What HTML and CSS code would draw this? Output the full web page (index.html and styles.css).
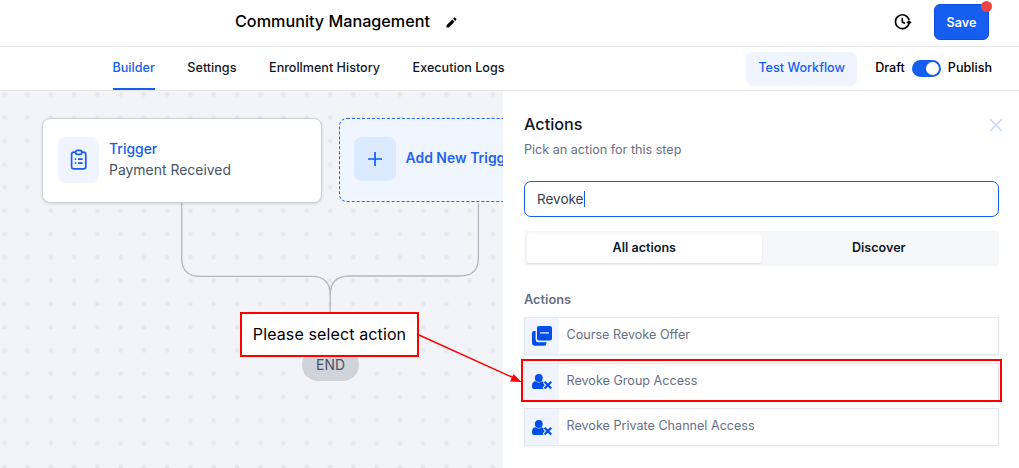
FILE: index.html
```html
<!DOCTYPE html>
<html lang="en">

<head>
    <meta charset="UTF-8">
    <meta name="viewport" content="width=device-width, initial-scale=1.0">
    <title>Community Management</title>
    <link rel="stylesheet" href="styles.css">
</head>

<body>
    <header class="topbar">
        <div class="title">
            <h1>Community Management</h1>
            <svg class="pencil" width="11" height="11" viewBox="0 0 12 12">
                <path d="M0.6 11.4V9L6.9 2.7L9.3 5.1L3 11.4ZM7.7 1.9L8.8 0.8Q9.5 0.3 10.1 0.9L11.1 1.9Q11.7 2.5 11.1 3.2L10.1 4.3Z" />
            </svg>
        </div>
        <svg class="history" width="18" height="18" viewBox="0 0 18 18">
            <path d="M15.2 9.6A6.9 6.9 0 1 1 15.1 7.2M13.2 13.8A6.9 6.9 0 0 1 8.3 15.9" />
            <path d="M8.3 4.8V9L11 10.5" />
            <path class="head" d="M12.3 9.6L15 7.2L17.6 9.6L15 11.6Z" />
        </svg>
        <button class="save">Save<span class="unsaved"></span></button>
    </header>

    <nav class="tabs">
        <div class="tab-list">
            <a class="tab active">Builder</a>
            <a class="tab">Settings</a>
            <a class="tab">Enrollment History</a>
            <a class="tab">Execution Logs</a>
        </div>
        <button class="test">Test Workflow</button>
        <div class="publish">
            <span>Draft</span>
            <span class="toggle"></span>
            <span>Publish</span>
        </div>
    </nav>

    <main class="workspace">
        <section class="canvas">
            <svg class="wires" width="503" height="377" viewBox="0 91 503 377">
                <defs>
                    <pattern id="dots" x="-7.3" y="82.9" width="23.27" height="23.27" patternUnits="userSpaceOnUse">
                        <circle cx="11.63" cy="11.63" r="2.4" fill="#e7e8e9" />
                    </pattern>
                </defs>
                <rect y="91" width="503" height="377" fill="url(#dots)" />
                <path d="M181.7 203V258Q181.7 276.4 200 276.4H312Q330.2 276.4 330.2 295V350" />
                <path d="M478.4 203V258Q478.4 276 460 276H348.5Q330.2 276.4 330.2 295" />
            </svg>

            <div class="node trigger">
                <div class="node-icon">
                    <svg width="18" height="22" viewBox="0 0 18 22">
                        <rect x="1.6" y="3.2" width="14.2" height="16.6" rx="2.4" />
                        <rect class="clip" x="5.6" y="1.4" width="6.2" height="4" rx="1.8" />
                        <path d="M4.8 10.2H6.2M8 10.2H12.6M4.8 14.2H6.2M8 14.2H12.6" />
                    </svg>
                </div>
                <div>
                    <div class="node-title">Trigger</div>
                    <div class="node-text">Payment Received</div>
                </div>
            </div>

            <div class="node add">
                <div class="node-icon">
                    <svg width="16" height="16" viewBox="0 0 16 16">
                        <path d="M8 1V15M1 8H15" />
                    </svg>
                </div>
                <div class="node-title">Add New Trigger</div>
            </div>

            <div class="end">END</div>
        </section>

        <aside class="panel">
            <div class="panel-head">
                <h2>Actions</h2>
                <svg class="close" width="14" height="14" viewBox="0 0 14 14">
                    <path d="M1 1L13 13M13 1L1 13" />
                </svg>
            </div>
            <p class="hint">Pick an action for this step</p>
            <div class="search">Revoke<span class="caret"></span></div>
            <div class="segments">
                <div class="segment selected">All actions</div>
                <div class="segment">Discover</div>
            </div>
            <h3>Actions</h3>
            <div class="actions">
                <div class="action">
                    <div class="action-icon">
                        <svg width="20" height="20" viewBox="0 0 20 20">
                            <path fill-rule="evenodd" d="M7 0H18Q20 0 20 2V12.4Q20 14.4 18 14.4H7Q5 14.4 5 12.4V2Q5 0 7 0ZM8 6.3V7.6H17V6.3Z" />
                            <path d="M2 5H3.6V13.4Q3.8 16 6.4 16.2H14.4V17.6Q14.4 19.8 12.2 19.8H3Q0 19.8 0 16.8V7Q0 5 2 5Z" />
                        </svg>
                    </div>
                    <span>Course Revoke Offer</span>
                </div>
                <div class="action">
                    <div class="action-icon">
                        <svg class="user-x" width="20" height="16" viewBox="0 0 20 16">
                            <circle cx="6.8" cy="4" r="3.9" />
                            <path d="M0 13V12Q0 7.4 3.6 7.2Q6.8 9.6 10 7.2Q11.2 7.5 11.6 8.1L11.2 9.2L12.8 11.2L10.6 13.6L11.2 15H2Q0 15 0 13Z" />
                            <path class="cross" d="M12.6 7.8L19.2 14.6M19.2 7.8L12.6 14.6" />
                        </svg>
                    </div>
                    <span>Revoke Group Access</span>
                </div>
                <div class="action">
                    <div class="action-icon">
                        <svg class="user-x" width="20" height="16" viewBox="0 0 20 16">
                            <circle cx="6.8" cy="4" r="3.9" />
                            <path d="M0 13V12Q0 7.4 3.6 7.2Q6.8 9.6 10 7.2Q11.2 7.5 11.6 8.1L11.2 9.2L12.8 11.2L10.6 13.6L11.2 15H2Q0 15 0 13Z" />
                            <path class="cross" d="M12.6 7.8L19.2 14.6M19.2 7.8L12.6 14.6" />
                        </svg>
                    </div>
                    <span>Revoke Private Channel Access</span>
                </div>
            </div>
        </aside>
    </main>

    <!-- walkthrough callout over the page -->
    <div class="callout">Please select action</div>
    <svg class="arrow" width="106" height="54" viewBox="0 0 106 54">
        <path d="M1 4L95 46.5" />
        <path class="head" d="M103.5 51L92 50.6L95.6 43Z" />
    </svg>
    <div class="highlight"></div>
</body>

</html>
```

FILE: styles.css
```css
* {
    box-sizing: border-box;
}

body {
    position: relative;
    display: flex;
    flex-direction: column;
    width: 1019px;
    height: 468px;
    margin: 0;
    overflow: hidden;
    font-family: Inter, "Liberation Sans", sans-serif;
    font-size: 12.6px;
    color: #101828;
    background-color: #ffffff;
}

h1,
h2,
h3,
p {
    margin: 0;
}

button {
    font-family: inherit;
    border: none;
    padding: 0;
}

svg {
    flex: none;
}

/* top bar */
.topbar {
    display: flex;
    align-items: center;
    height: 47px;
    padding: 0 30px 2px 235px;
    border-bottom: 1px solid #e6e7ea;
}

.title {
    display: flex;
    align-items: center;
    gap: 16px;
    margin-right: auto;
}

h1 {
    padding-bottom: 2px;
    font-size: 16.2px;
    font-weight: 500;
    line-height: 20px;
    color: #000000;
}

.history {
    margin-right: 22px;
    fill: none;
    stroke: #000000;
    stroke-width: 1.6;
}

.history .head {
    fill: #000000;
    stroke: none;
}

.save {
    position: relative;
    width: 55px;
    height: 36px;
    border: 1px solid #0b4fe0;
    border-radius: 6px;
    font-size: 12.6px;
    font-weight: 600;
    color: #ffffff;
    background-color: #155eef;
}

.unsaved {
    position: absolute;
    top: -4px;
    right: -4px;
    width: 11px;
    height: 11px;
    border-radius: 50%;
    background-color: #ef4444;
}

/* tabs */
.tabs {
    display: flex;
    align-items: center;
    height: 44px;
    padding: 0 27px 0 112.5px;
    border-bottom: 1px solid #e6e7ea;
}

.tab-list {
    display: flex;
    align-self: stretch;
    gap: 32.6px;
    margin-right: auto;
}

.tab {
    height: 43px;
    line-height: 42px;
    font-weight: 500;
    border-bottom: 2px solid transparent;
}

.tab.active {
    color: #155eef;
    border-color: #155eef;
}

.test {
    width: 111px;
    height: 33px;
    margin-right: 18px;
    padding-bottom: 2px;
    border-radius: 7px;
    font-size: 12.6px;
    font-weight: 500;
    color: #155eef;
    background-color: #eff4ff;
    box-shadow: 0 1px 2px rgba(16, 24, 40, 0.05);
}

.publish {
    display: flex;
    align-items: center;
    gap: 7px;
    padding-bottom: 2px;
    font-weight: 500;
    color: #000000;
}

.toggle {
    display: flex;
    justify-content: flex-end;
    width: 29px;
    height: 17px;
    margin-top: 2px;
    padding: 2px;
    border-radius: 9px;
    background-color: #155eef;
}

.toggle::after {
    content: "";
    width: 13px;
    height: 13px;
    border-radius: 50%;
    background-color: #ffffff;
}

.workspace {
    display: flex;
    flex: 1;
}

/* canvas */
.canvas {
    position: relative;
    width: 503px;
    overflow: hidden;
    background-color: #f2f4f7;
}

.wires {
    display: block;
    fill: none;
    stroke: #b4b7bf;
    stroke-width: 1.3;
}

.wires rect,
.wires circle {
    stroke: none;
}

.node {
    position: absolute;
    top: 27px;
    display: flex;
    align-items: center;
    width: 280px;
    height: 85px;
    border-radius: 8px;
}

.trigger {
    left: 42px;
    padding-left: 15px;
    padding-bottom: 1px;
    border: 1px solid #cdd0d8;
    background-color: #ffffff;
    box-shadow: 0 1px 3px rgba(16, 24, 40, 0.15);
}

.add {
    left: 339px;
    height: 84px;
    padding-left: 14px;
    padding-bottom: 3px;
    border: 1px dashed #2563eb;
    background-color: #eff6ff;
}

.node-icon {
    display: flex;
    flex: none;
    align-items: center;
    justify-content: center;
    width: 41px;
    height: 46px;
    margin-right: 10px;
    border-radius: 8px;
    background-color: #eff4ff;
}

.node-icon svg {
    fill: none;
    stroke: #155eef;
    stroke-width: 1.7;
}

.node-icon .clip {
    fill: #eff4ff;
}

.add .node-icon {
    width: 42px;
    height: 44px;
    margin-right: 9.5px;
    background-color: #dbeafe;
}

.node-title {
    font-size: 13.95px;
    font-weight: 500;
    line-height: 21px;
    white-space: nowrap;
    color: #155eef;
}

.trigger .node-title {
    margin-top: -3px;
}

.add .node-title {
    padding-bottom: 2px;
    font-weight: 600;
    color: #2563eb;
}

.node-text {
    font-size: 13.95px;
    line-height: 21px;
    color: #475467;
}

.end {
    position: absolute;
    left: 302px;
    top: 258px;
    width: 57px;
    height: 32px;
    border-radius: 16px;
    font-size: 13.95px;
    line-height: 32px;
    text-align: center;
    color: #475467;
    background-color: #d0d3da;
}

/* actions panel */
.panel {
    flex: 1;
    padding: 22px 20px 0 21px;
}

.panel-head {
    display: flex;
    justify-content: space-between;
    align-items: center;
}

h2 {
    font-size: 16.2px;
    font-weight: 500;
    line-height: 22px;
}

.close {
    margin-right: -4px;
    margin-top: 1px;
    fill: none;
    stroke: #c7d7fe;
    stroke-width: 1.6;
}

.hint {
    margin-top: 6px;
    line-height: 18px;
    color: #667085;
}

.search {
    display: flex;
    align-items: center;
    height: 36px;
    margin-top: 22px;
    padding-left: 12px;
    padding-bottom: 1px;
    border: 1px solid #155eef;
    border-radius: 7px;
    font-size: 13.5px;
    color: #344054;
}

.caret {
    width: 1px;
    height: 16px;
    background-color: #155eef;
}

.segments {
    display: flex;
    height: 35px;
    margin-top: 14px;
    padding: 3px;
    border-radius: 3px;
    background-color: #f6f7f9;
}

.segment {
    flex: 1;
    border-radius: 3px;
    font-weight: 600;
    line-height: 27px;
    text-align: center;
}

.segment.selected {
    background-color: #ffffff;
    box-shadow: 0 1px 2px rgba(16, 24, 40, 0.1);
}

h3 {
    margin-top: 25px;
    font-size: 12.8px;
    font-weight: 600;
    line-height: 18px;
    color: #667085;
}

.actions {
    display: flex;
    flex-direction: column;
    gap: 7.5px;
    margin-top: 8px;
}

.action {
    display: flex;
    height: 38px;
    border: 1px solid #e4e7ec;
    line-height: 34.8px;
    color: #667085;
    box-shadow: 0 1px 2px rgba(16, 24, 40, 0.05);
}

.action + .action {
    line-height: 33.6px;
}

.action-icon {
    display: flex;
    align-items: center;
    justify-content: center;
    width: 34px;
    margin-right: 7.5px;
    background-color: #eff4ff;
}

.action-icon svg {
    fill: #004eeb;
}

.action-icon .user-x {
    margin-top: 1px;
}

.user-x .cross {
    stroke: #004eeb;
    stroke-width: 2.2;
}

/* callout */
.callout {
    position: absolute;
    left: 240px;
    top: 312px;
    width: 179px;
    height: 45px;
    border: 2px solid #ff0000;
    font-size: 16px;
    line-height: 41px;
    letter-spacing: 0.12px;
    text-align: center;
    color: #000000;
    background-color: #ffffff;
}

.arrow {
    position: absolute;
    left: 418px;
    top: 331px;
    fill: none;
    stroke: #ff0000;
    stroke-width: 1.4;
}

.arrow .head {
    fill: #ff0000;
    stroke: none;
}

.highlight {
    position: absolute;
    left: 521px;
    top: 359px;
    width: 481px;
    height: 43px;
    border: 2px solid #ff0000;
}
```
